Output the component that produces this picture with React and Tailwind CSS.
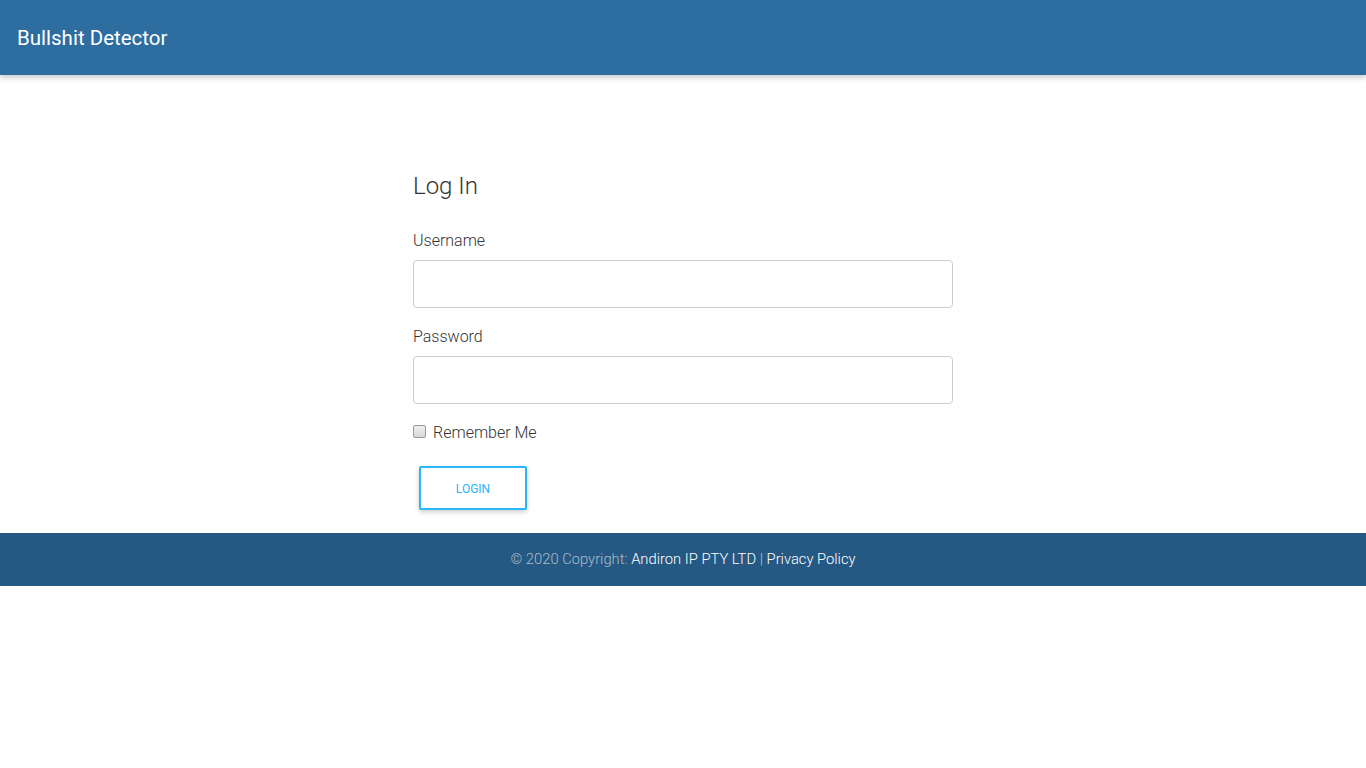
export default function App() {
  return (
    <div className="min-h-screen bg-white font-['Roboto',sans-serif] text-[#333]">
      {/* Navbar */}
      <nav className="relative z-10 flex h-[75px] items-center bg-[#2e6da0] px-4 shadow-[0_2px_6px_rgba(0,0,0,0.25)]">
        <span className="pl-[1px] pt-[1px] text-[20.5px] font-normal text-white">Bullshit Detector</span>
      </nav>

      {/* Login form */}
      <main className="flex justify-center pt-[97px] pb-[23px]">
        <div className="w-[540px]">
          <h1 className="text-[24px] font-light leading-[29px] text-[#333]">Log In</h1>

          <label className="mt-[28px] block text-[16px] font-light leading-6">Username</label>
          <input
            type="text"
            className="mt-[7px] block h-12 w-full rounded border border-[#ccc] px-3 outline-none"
          />

          <label className="mt-[17px] block text-[16px] font-light leading-6">Password</label>
          <input
            type="password"
            className="mt-[7px] block h-12 w-full rounded border border-[#ccc] px-3 outline-none"
          />

          <div className="mt-[17px] flex items-center">
            <span className="-mt-[3px] block h-[13px] w-[13px] rounded-[2px] border border-[#9a9a9a] bg-gradient-to-b from-[#f0f0f0] to-[#d8d8d8]" />
            <span className="ml-[7px] text-[16px] font-light leading-6">Remember Me</span>
          </div>

          <button className="ml-[6px] mt-[21px] flex h-[44px] w-[108px] items-center justify-center rounded-[2px] border-2 border-[#29b6f6] bg-white pt-[2px] text-[12px] font-normal uppercase text-[#29b6f6] shadow-[0_2px_5px_rgba(0,0,0,0.2)]">
            Login
          </button>
        </div>
      </main>

      {/* Footer */}
      <footer className="flex h-[53px] items-center justify-center bg-[#255882] text-[14.75px] font-light">
        <span className="text-white/60">© 2020 Copyright:&nbsp;</span>
        <span className="text-white">Andiron IP PTY LTD</span>
        <span className="text-white/70">&nbsp;|&nbsp;</span>
        <span className="text-white">Privacy Policy</span>
      </footer>
    </div>
  );
}
